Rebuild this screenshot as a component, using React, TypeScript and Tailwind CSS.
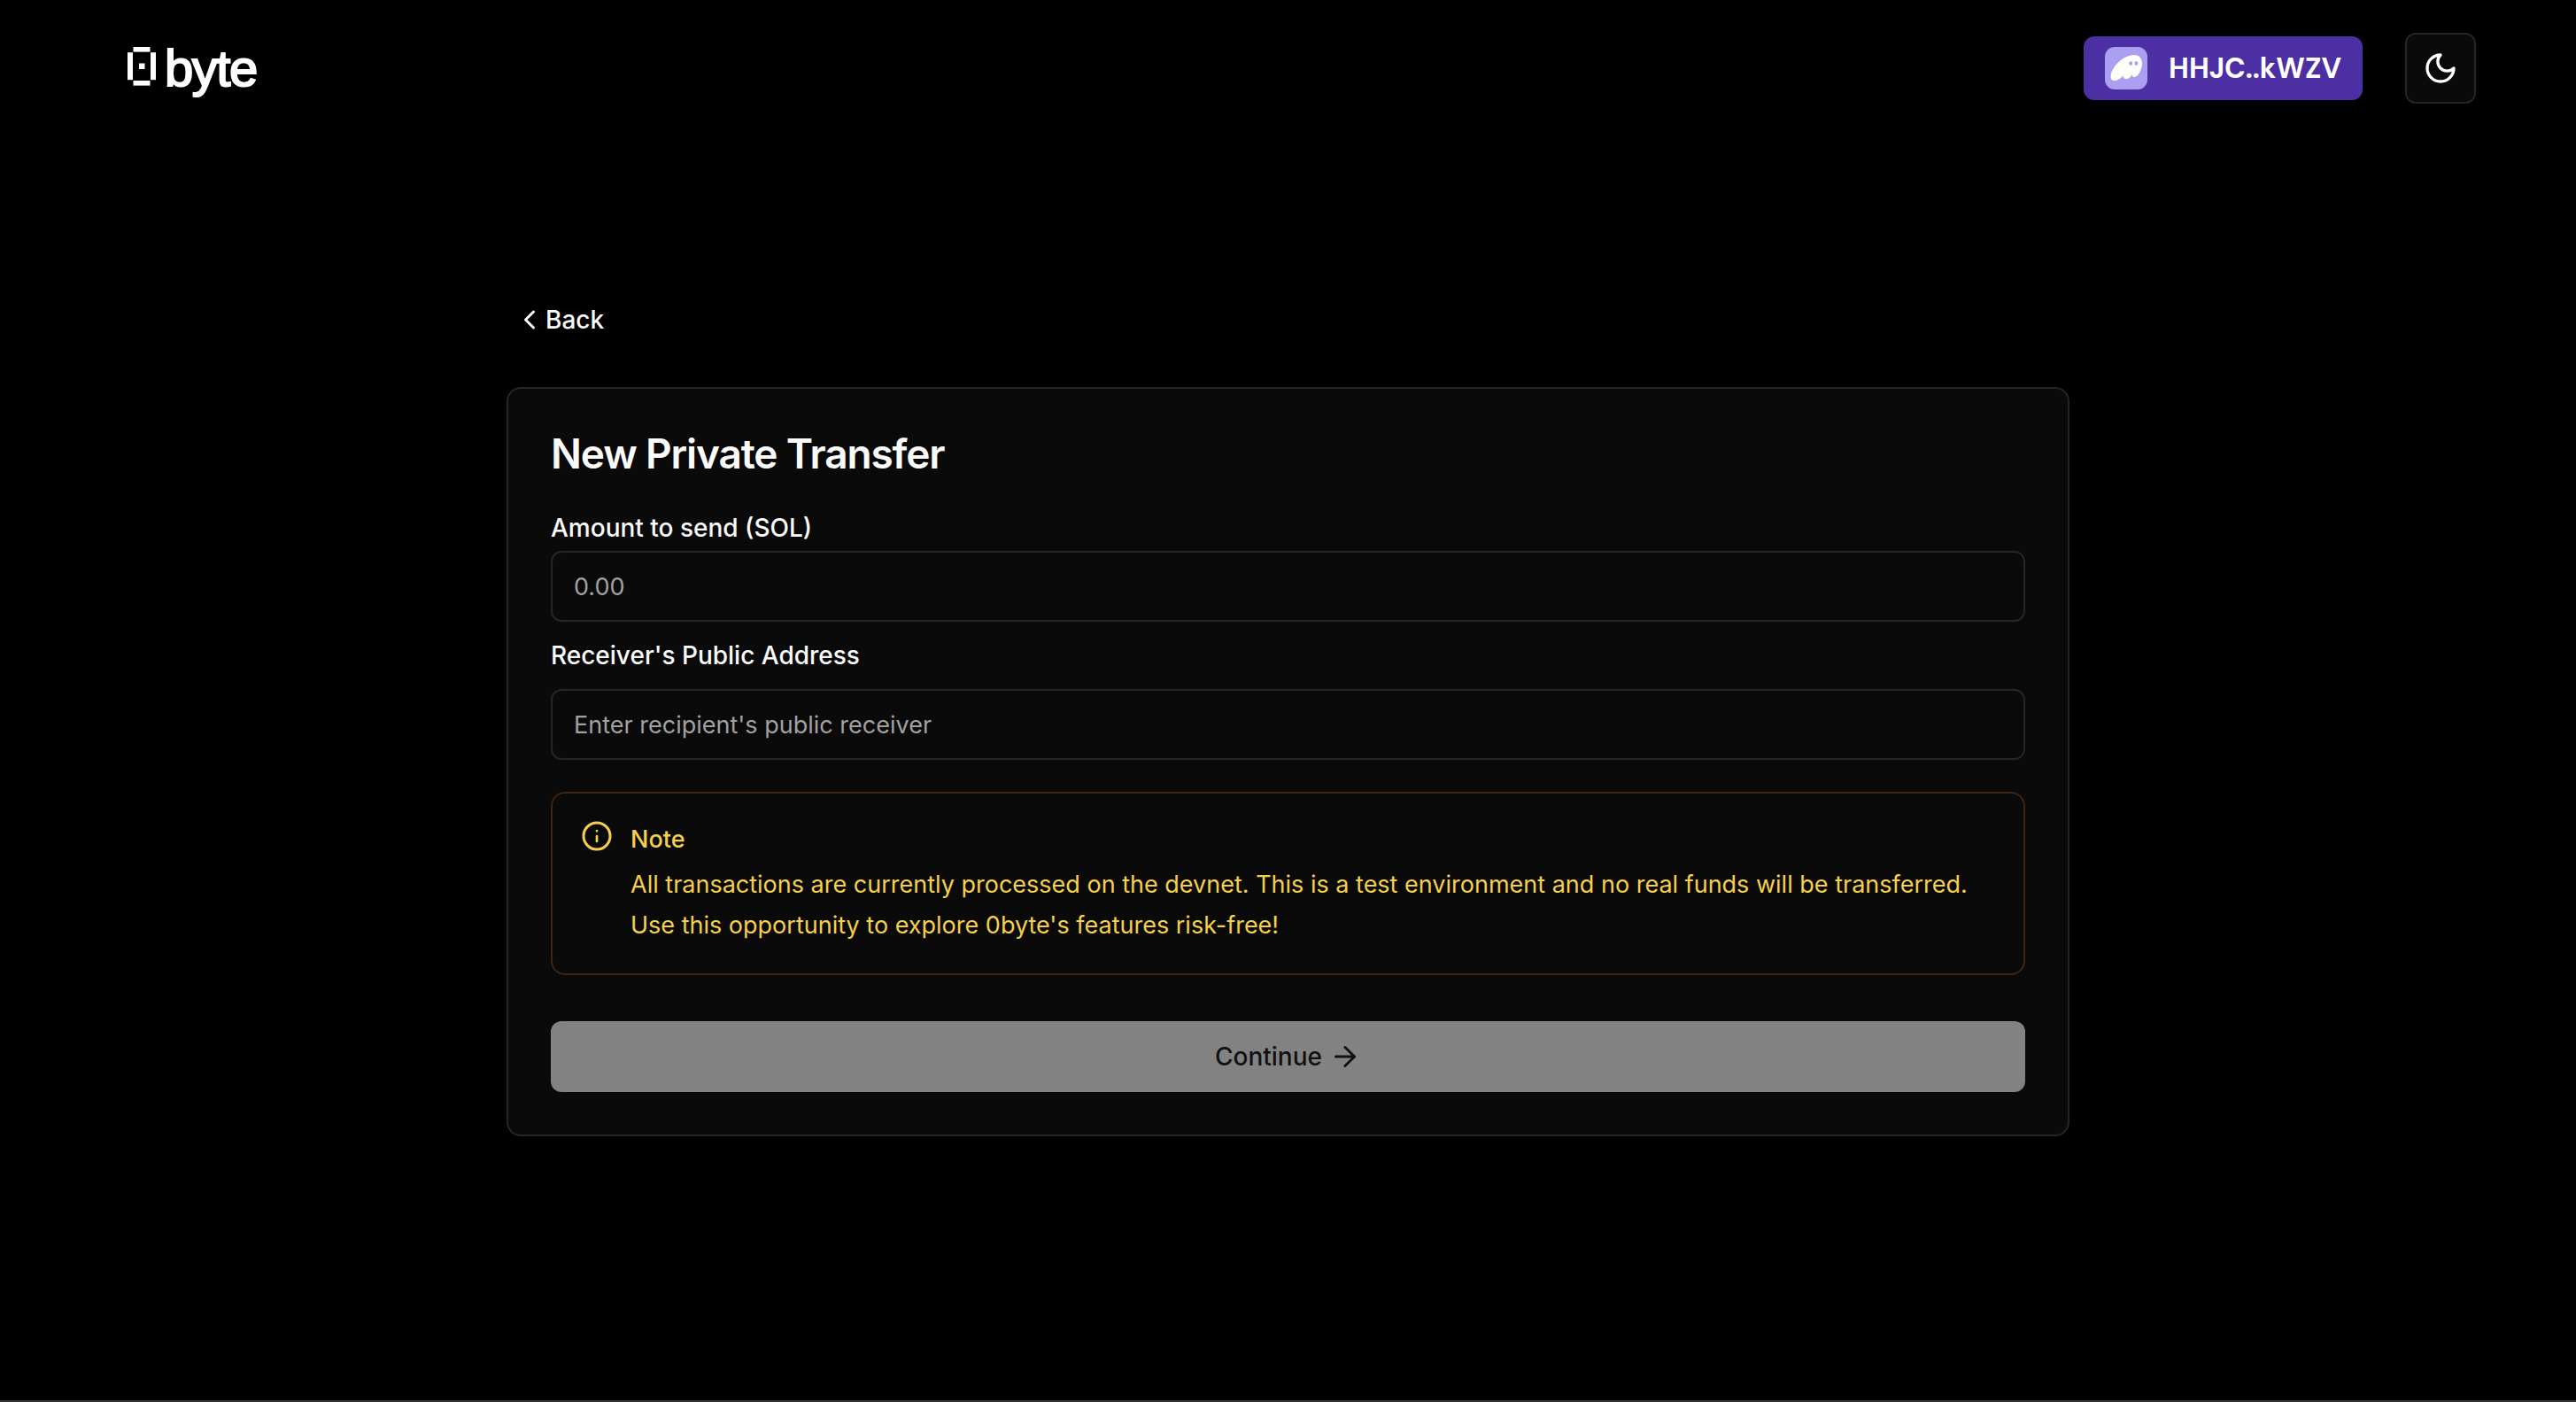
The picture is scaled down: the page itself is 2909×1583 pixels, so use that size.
import { ArrowRight, ChevronLeft } from "lucide-react";

function Logo() {
  return (
    <a href="#" aria-label="0byte" className="flex items-center gap-2.5 text-white">
      <svg viewBox="0 0 32 44" className="mb-1 h-11 w-8" fill="currentColor" aria-hidden="true">
        <rect x="6.5" y="0" width="19" height="5.6" />
        <rect x="0" y="6.2" width="6" height="31" />
        <rect x="26" y="6.2" width="6" height="31" />
        <rect x="6.5" y="38" width="19" height="5.6" />
        <rect x="13" y="18.5" width="6.5" height="6.5" />
      </svg>
      <span className="font-['Liberation_Sans',sans-serif] text-[58px] leading-[60px] tracking-tight [-webkit-text-stroke:2px_white]">
        byte
      </span>
    </a>
  );
}

function Ghost() {
  return (
    <svg viewBox="0 0 48 48" className="size-12" aria-hidden="true">
      <rect width="48" height="48" rx="11" fill="#ab9ff2" />
      <path
        d="M20.8 31.8C18.8 34.9 15.3 38.1 10.8 38.1C8.6 38.1 6.7 37.2 6.7 33.2C6.7 23.2 20.4 8.9 33 8.9C39.3 8.9 42 13.4 42 18.5C42 25 37.8 34 33.2 34C31.8 34 31 33.2 31 31.9C31 31.6 31.1 31.2 31.2 30.8C29.7 33.5 26.7 36.2 24 36.2C22 36.2 21 34.9 20.5 33.9Z"
        fill="#fffdf8"
      />
      <ellipse cx="29.2" cy="18.6" rx="1.9" ry="2.4" fill="#ab9ff2" />
      <ellipse cx="35.4" cy="18.6" rx="1.9" ry="2.4" fill="#ab9ff2" />
    </svg>
  );
}

function MoonIcon() {
  return (
    <svg viewBox="0 0 24 24" className="size-10" fill="none" stroke="currentColor" strokeWidth="2" strokeLinecap="round" strokeLinejoin="round" aria-hidden="true">
      <path d="M12 3a6 6 0 0 0 9 9 9 9 0 1 1-9-9Z" />
    </svg>
  );
}

function InfoIcon() {
  return (
    <svg viewBox="0 0 24 24" className="size-10 shrink-0" fill="none" stroke="currentColor" strokeWidth="1.8" strokeLinecap="round" aria-hidden="true">
      <circle cx="12" cy="12" r="9" />
      <path strokeWidth="1.6" d="M12 12v3.6M12 8.5v.1" />
    </svg>
  );
}

const fieldClass =
  "block h-20 w-full rounded-xl border-2 border-neutral-800 bg-transparent px-6 text-[27px] text-neutral-50 outline-none placeholder:text-neutral-400 focus:border-neutral-600";

export default function App() {
  return (
    <div className="flex min-h-screen flex-col border-b-2 border-[#333333] bg-black font-[Inter,sans-serif] text-[28px] text-neutral-50">
      <header className="flex items-center justify-between pt-[37px] pr-[113px] pl-36">
        <Logo />
        <div className="flex items-center gap-12">
          <button type="button" className="flex h-[72px] items-center gap-6 rounded-xl bg-[#4c2fa2] px-6 font-['DM_Sans',Inter,sans-serif] text-[32px] font-bold text-white">
            <Ghost />
            HHJC..kWZV
          </button>
          <button type="button" aria-label="Toggle theme" className="flex size-20 items-center justify-center rounded-xl border-2 border-neutral-800 bg-neutral-950 text-white">
            <MoonIcon />
          </button>
        </div>
      </header>

      <main className="mx-auto w-full max-w-[1765px] pt-[206px]">
        <button type="button" className="flex h-[76px] items-center px-2 font-medium">
          <ChevronLeft className="size-9" strokeWidth={2} />
          Back
        </button>

        <section className="mt-[38px] rounded-2xl border-2 border-neutral-800 bg-neutral-950 p-12">
          <h1 className="text-[46px] leading-[50px] font-semibold tracking-tight">New Private Transfer</h1>
          <form>
            <label htmlFor="amount" className="mt-[39px] mb-1.5 block leading-10 font-medium">
              Amount to send (SOL)
            </label>
            <input id="amount" type="text" inputMode="decimal" placeholder="0.00" className={fieldClass} />

            <label htmlFor="receiver" className="mt-[18px] mb-[18px] block leading-10 font-medium">
              Receiver's Public Address
            </label>
            <input id="receiver" type="text" placeholder="Enter recipient's public receiver" className={fieldClass} />

            <div role="note" className="mt-9 flex gap-[18px] rounded-2xl border-2 border-[#3d2614] px-[30px] pt-7 pb-[31px] text-[27px] text-[#f5d04c]">
              <InfoIcon />
              <div>
                <h2 className="mt-1 leading-10 font-medium">Note</h2>
                <p className="mt-2 leading-[46px]">
                  All transactions are currently processed on the devnet. This is a test environment and no real funds will be
                  transferred. Use this opportunity to explore 0byte's features risk-free!
                </p>
              </div>
            </div>

            <button type="submit" disabled className="mt-[52px] flex h-20 w-full items-center justify-center gap-2 rounded-xl bg-[#828282] font-medium text-[#111111]">
              Continue
              <ArrowRight className="size-9" />
            </button>
          </form>
        </section>
      </main>
    </div>
  );
}
